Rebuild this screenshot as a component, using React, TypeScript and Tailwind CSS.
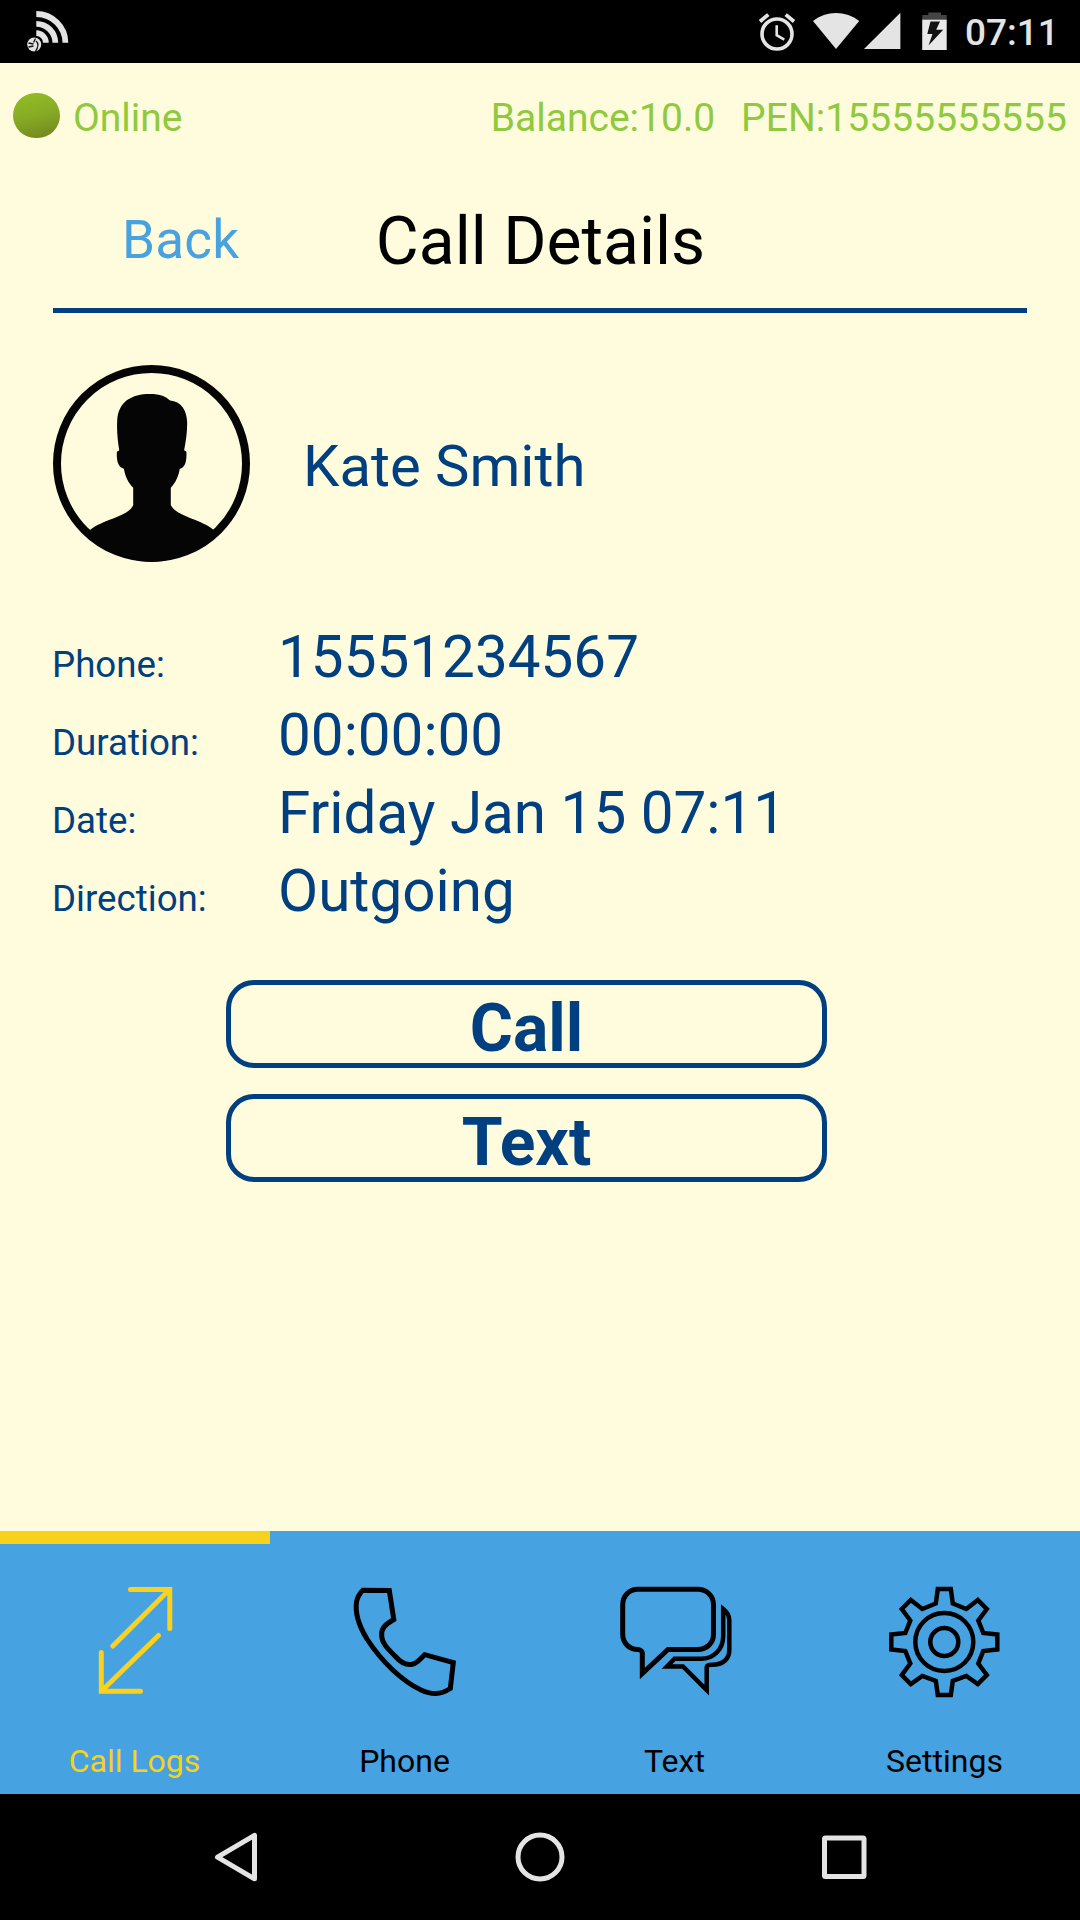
import React from "react";

const details = [
  { label: "Phone:", value: "15551234567" },
  { label: "Duration:", value: "00:00:00" },
  { label: "Date:", value: "Friday Jan 15 07:11" },
  { label: "Direction:", value: "Outgoing" },
];

function StatusBar() {
  return (
    <div className="flex h-[63px] items-center justify-between bg-black pl-[24px] pr-[24px]">
      <svg className="h-[63px] w-[48px]" viewBox="24 0 48 63" fill="none">
        <g stroke="#e4e4e4" strokeWidth="5.8">
          <path d="M36.3 33.2A9.6 9.6 0 0 1 45.9 42.8" />
          <path d="M36.3 23.8A19 19 0 0 1 55.3 42.8" />
          <path d="M36.3 14A29 29 0 0 1 65.4 42.8" />
        </g>
        <circle cx="34.2" cy="44.5" r="7" fill="#e4e4e4" />
        <path
          d="M28.5 43l5 1M35.500 38.500l-2 4M36 41c2.500 2 2.500 6-.8 11M28.500 47l5-1"
          stroke="#111"
          strokeWidth="1.3"
        />
      </svg>
      <div className="flex items-center">
        <svg className="h-[63px] w-[190px]" viewBox="758 0 190 63" fill="none">
          <circle cx="777" cy="34" r="15" stroke="#e4e4e4" strokeWidth="3.6" />
          <path d="M776.7 25.2V35.2L784.3 39.6" stroke="#e4e4e4" strokeWidth="2.6" />
          <path d="M760 21.5L768.3 14.6M785.7 14.6L794 21.5" stroke="#e4e4e4" strokeWidth="3.8" />
          <path d="M813 21C826 10.200 846 10.200 859.200 21L836 49Z" fill="#e4e4e4" />
          <path d="M864 49L900.400 12.700V49Z" fill="#e4e4e4" />
          <path d="M928.300 12.500h12.700v2.500h5.700v5h-24.500v-5h6.100z" fill="#444" />
          <path d="M922.200 19.700h24.500V50h-24.500z" fill="#e8e8e8" />
          <path d="M930.500 21.500h9.500l-3.800 8.300h7L928.500 45.500l4-11.500h-5.200z" fill="#111" />
        </svg>
        <div className="ml-[17px] w-[91px] pt-[2px] text-[37px] font-medium leading-[66px] text-[#e4e4e4]">07:11</div>
      </div>
    </div>
  );
}

function AccountBar() {
  return (
    <div className="flex h-[109px] items-center pl-[13px] pr-[13px] text-[39px] leading-[46px] text-[#8fca3e]">
      <div className="mb-[4px] h-[45px] w-[47px] rounded-full bg-linear-165 from-[#94be25] via-[#86ab24] to-[#70821f]" />
      <div className="ml-[13px] grow">Online</div>
      <div>Balance:10.0</div>
      <div className="ml-[26px] tracking-[0.05px]">PEN:15555555555</div>
    </div>
  );
}

function Avatar() {
  return (
    <svg className="h-[197px] w-[197px]" viewBox="39 45 592 592">
      <circle cx="335" cy="341" r="284" fill="none" stroke="#050505" strokeWidth="24" />
      <path
        fill="#050505"
        d="M150 541C190 508 268 500 280 466V414C264 398 256 380 252 357C236 352 229 336 231 306L238 301C234 275 230 245 232 210C236 155 275 132 330 132C362 132 378 139 391 152C424 155 440 180 442 215C443 245 438 275 433 301L440 306C441 336 436 352 420 357C416 380 408 398 393 414V466C408 500 485 508 522 541C475 600 410 636 335 636C260 636 195 600 150 541Z"
      />
    </svg>
  );
}

function CallLogsIcon() {
  return (
    <svg className="h-[140px] w-[270px]" viewBox="0 1564 270 140" fill="none" stroke="#fad11c" strokeWidth="5" strokeLinecap="round">
      <path d="M130.500 1589.500H169.800V1628.500M169.500 1589.500L112.800 1646" />
      <path d="M101.300 1652.500V1691.300H140.500M101.500 1691L158.500 1635.500" />
    </svg>
  );
}

function PhoneIcon() {
  return (
    <svg className="h-[140px] w-[270px]" viewBox="270 1564 270 140" fill="none" stroke="#000" strokeWidth="5">
      <path d="M362.800 1590.200L389.300 1590.500L393.800 1619.500C384 1625 381 1629 381.700 1636C382 1643 387 1648 395 1656C402 1664 407 1665 411 1664.500C417 1664 420 1659 424.800 1654.700L453.300 1662.500L450.300 1688.500C440 1695 432 1695 421 1690C402 1681 382 1662 367 1639C359 1626 355 1613 356.500 1602C357.500 1597 360 1593 362.800 1590.200Z" />
    </svg>
  );
}

function TextIcon() {
  return (
    <svg className="h-[140px] w-[270px]" viewBox="540 1564 270 140" fill="none" stroke="#000" strokeWidth="5">
      <path d="M638 1589.300H697.500C707 1589.300 713.500 1596 713.500 1605V1634C713.500 1643 707 1649.500 697.500 1649.500H668L642.300 1673.500V1653C642 1650.500 641 1650 638 1649.500C629 1649.500 622.700 1643 622.700 1634V1605C622.700 1596 629 1589.300 638 1589.300Z" />
      <path
        strokeWidth="4.500"
        d="M723.200 1609V1636C723.200 1649 714 1658.800 701 1658.800H674.500L667 1666.500H683L706.700 1690V1667C707 1665 708.500 1664.800 712 1664.800C723 1664.800 729.300 1659 729.300 1650V1620C729.300 1615 727 1612 723.200 1609Z"
      />
    </svg>
  );
}

function SettingsIcon() {
  return (
    <svg className="h-[140px] w-[270px]" viewBox="810 1564 270 140" fill="none" stroke="#000" strokeWidth="4.500">
      <g transform="translate(944.300 1642)">
        <path d="M-6.500 -53H6.500L8.500 -38.500L22 -33L33.500 -42L42.500 -33L34 -21.500L39 -9L53 -7.500V7.500L39 9L34 21.500L42.500 33L33.500 42L22 34L8.500 39L6.500 53H-6.500L-8.500 39L-22 34L-33.500 42L-42.500 33L-34 21.500L-39 9L-53 7.500V-7.500L-39 -9L-34 -21.500L-42.500 -33L-33.500 -42L-22 -33L-8.500 -38.500Z" />
        <circle r="29" />
        <circle r="14" />
      </g>
    </svg>
  );
}

const tabs = [
  { name: "Call Logs", icon: <CallLogsIcon />, active: true },
  { name: "Phone", icon: <PhoneIcon />, active: false },
  { name: "Text", icon: <TextIcon />, active: false },
  { name: "Settings", icon: <SettingsIcon />, active: false },
];

function TabBar() {
  return (
    <div className="grid h-[263px] grid-cols-4 bg-[#46a2e0] text-center text-[32px] leading-[40px]">
      {tabs.map((tab) => (
        <div key={tab.name} className={tab.active ? "text-[#f8d21a]" : "text-black"}>
          <div className={tab.active ? "h-[13px] bg-[#f8d21a]" : "h-[13px]"} />
          <div className="mt-[20px] h-[140px]">{tab.icon}</div>
          <div className="mt-[37px] pr-px">{tab.name}</div>
        </div>
      ))}
    </div>
  );
}

function NavBar() {
  return (
    <div className="flex h-[126px] items-center bg-black">
      <svg className="h-[126px] w-full" viewBox="0 1794 1080 126" fill="none" stroke="#e4e4e4" strokeWidth="5" strokeLinejoin="round">
        <path d="M217.500 1857.200L254.500 1835.300V1878.800Z" />
        <circle cx="540" cy="1857" r="22" />
        <rect x="824.500" y="1838" width="39.500" height="38.500" rx="1" />
      </svg>
    </div>
  );
}

function App() {
  return (
    <div className="flex h-[1920px] w-[1080px] flex-col overflow-hidden bg-[#fffbdd] font-[Roboto,sans-serif]">
      <StatusBar />
      <AccountBar />
      <div className="mx-[53px] grid h-[141px] grid-cols-[1fr_auto_1fr] items-center border-b-[5px] border-[#004080]">
        <div className="pl-[69px] text-[53px] leading-[60px] tracking-[0.2px] text-[#48a2e0]">Back</div>
        <div className="pl-px pt-[3px] text-[66px] leading-[76px] text-black">Call Details</div>
      </div>
      <div className="mt-[52px] flex items-center px-[53px] text-[#004080]">
        <Avatar />
        <div className="ml-[53px] pt-[4px] text-[58px] leading-[68px]">Kate Smith</div>
      </div>
      <div className="mt-[56px] px-[52px] text-[#004080]">
        {details.map((row) => (
          <div key={row.label} className="flex h-[78px] items-baseline">
            <div className="w-[226px] text-[36.700px]">{row.label}</div>
            <div className="text-[58.400px] leading-[78px]">{row.value}</div>
          </div>
        ))}
      </div>
      <div className="ml-[226px] mt-[50px] flex w-[601px] grow flex-col gap-[26px] text-[66px] font-bold text-[#004080]">
        <button className="h-[88px] rounded-[28px] border-[5px] border-[#004080] pt-[6px] leading-[76px]">Call</button>
        <button className="h-[88px] rounded-[28px] border-[5px] border-[#004080] pt-[6px] leading-[76px]">Text</button>
      </div>
      <TabBar />
      <NavBar />
    </div>
  );
}

export default App;
